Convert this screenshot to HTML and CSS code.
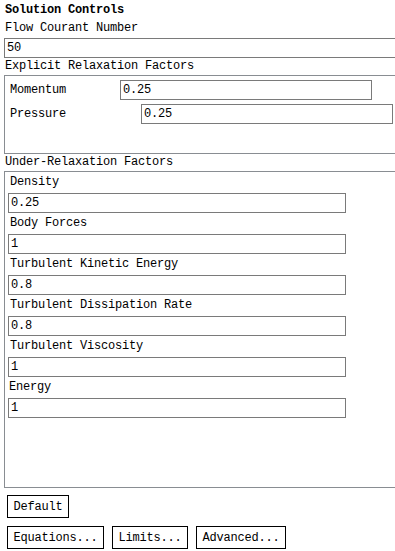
FILE: index.html
```html
<!DOCTYPE html>
<html lang="en">
<head>
    <meta charset="UTF-8">
    <meta name="viewport" content="width=device-width, initial-scale=1.0">
    <title>Solution Controls</title>
    <link rel="stylesheet" href="styles.css">
</head>
<body>
    <div class="panel">
        <h1 class="title">Solution Controls</h1>

        <div class="field-label">Flow Courant Number</div>
        <input type="text" class="text-input wide" value="50">

        <div class="group-label">Explicit Relaxation Factors</div>
        <div class="group explicit">
            <div class="row">
                <label class="lbl-momentum">Momentum</label>
                <input type="text" class="text-input" value="0.25">
            </div>
            <div class="row">
                <label class="lbl-pressure">Pressure</label>
                <input type="text" class="text-input" value="0.25">
            </div>
        </div>

        <div class="group-label">Under-Relaxation Factors</div>
        <div class="group under">
            <div class="item-label">Density</div>
            <input type="text" class="text-input" value="0.25">
            <div class="item-label">Body Forces</div>
            <input type="text" class="text-input" value="1">
            <div class="item-label">Turbulent Kinetic Energy</div>
            <input type="text" class="text-input" value="0.8">
            <div class="item-label">Turbulent Dissipation Rate</div>
            <input type="text" class="text-input" value="0.8">
            <div class="item-label">Turbulent Viscosity</div>
            <input type="text" class="text-input" value="1">
            <div class="item-label energy">Energy</div>
            <input type="text" class="text-input" value="1">
        </div>

        <div class="buttons">
            <button class="btn">Default</button>
        </div>
        <div class="buttons second">
            <button class="btn">Equations...</button>
            <button class="btn">Limits...</button>
            <button class="btn">Advanced...</button>
        </div>
    </div>
</body>
</html>
```

FILE: styles.css
```css
* {
    margin: 0;
    padding: 0;
    box-sizing: border-box;
    font-family: "Liberation Mono", "DejaVu Sans Mono", monospace;
}

html, body {
    background: #fff;
}

body {
    color: #000;
    font-size: 12px;
    letter-spacing: -0.2px;
}

.panel {
    padding: 1px 0 0 4px;
}

.title {
    font-size: 12px;
    font-weight: bold;
    line-height: 18px;
    padding-left: 1px;
}

.field-label {
    line-height: 19px;
    padding-left: 1px;
}

.group-label {
    line-height: 17px;
    padding-left: 1px;
}

.text-input {
    display: block;
    height: 20px;
    width: 252px;
    border: 1px solid #7a7a7a;
    padding: 0 2px;
    font-size: 12px;
    letter-spacing: -0.2px;
    color: #000;
    background: #fff;
    outline: none;
}

/* right edges run off the window in the original dialog */
.text-input.wide {
    width: 100%;
    border-right: none;
}

.group {
    border: 1px solid #898d92;
    border-right: none;
}

.explicit {
    padding: 4px 0 29px 5px;
    display: flex;
    flex-direction: column;
    gap: 4px;
}

.row {
    display: flex;
    align-items: center;
    height: 20px;
}

.lbl-momentum {
    width: 110px;
}

.lbl-pressure {
    width: 131px;
}

.under {
    padding: 0 0 69px 3px;
}

.under .text-input {
    width: 338px;
}

.item-label {
    line-height: 21px;
    padding-left: 2px;
}

.item-label.energy {
    padding-left: 1px;
    line-height: 20px;
    margin-bottom: 1px;
}

.buttons {
    display: flex;
    gap: 8px;
    margin-top: 7px;
    padding-left: 3px;
}

.buttons.second {
    margin-top: 8px;
}

.btn {
    height: 23px;
    padding: 0 5.5px;
    border: 1px solid #000;
    background: #fff;
    color: #000;
    font-size: 12px;
    letter-spacing: -0.2px;
}
```
